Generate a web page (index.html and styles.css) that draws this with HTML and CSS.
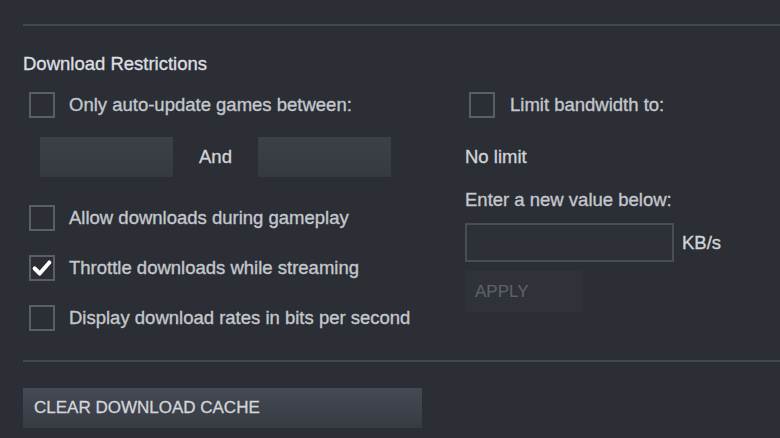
FILE: index.html
```html
<!DOCTYPE html>
<html lang="en">
<head>
    <meta charset="UTF-8">
    <meta name="viewport" content="width=device-width, initial-scale=1.0">
    <title>Downloads</title>
    <link rel="stylesheet" href="styles.css">
</head>
<body>
    <div class="page">
        <hr class="divider top">
        <h3 class="section-title">Download Restrictions</h3>
        <div class="columns">
            <div class="col-left">
                <label class="check-row">
                    <span class="box"></span>
                    <span>Only auto-update games between:</span>
                </label>
                <div class="time-range">
                    <div class="time-field"></div>
                    <span class="and">And</span>
                    <div class="time-field"></div>
                </div>
                <label class="check-row">
                    <span class="box"></span>
                    <span>Allow downloads during gameplay</span>
                </label>
                <label class="check-row">
                    <span class="box checked">
                        <svg viewBox="0 0 24 24" width="22" height="22"><path d="M4 12.5 L9.5 18 L20 6" fill="none" stroke="#fff" stroke-width="4.4" stroke-linecap="round" stroke-linejoin="round"/></svg>
                    </span>
                    <span>Throttle downloads while streaming</span>
                </label>
                <label class="check-row">
                    <span class="box"></span>
                    <span>Display download rates in bits per second</span>
                </label>
            </div>
            <div class="col-right">
                <label class="check-row">
                    <span class="box"></span>
                    <span>Limit bandwidth to:</span>
                </label>
                <p class="limit-value">No limit</p>
                <p class="limit-hint">Enter a new value below:</p>
                <div class="rate-row">
                    <div class="rate-field"></div>
                    <span class="unit">KB/s</span>
                </div>
                <button class="apply-btn">APPLY</button>
            </div>
        </div>
        <hr class="divider bottom">
        <button class="cache-btn">CLEAR DOWNLOAD CACHE</button>
    </div>
</body>
</html>
```

FILE: styles.css
```css
body {
    margin: 0;
    background: #2b2e34;
    font-family: "Liberation Sans", Arial, sans-serif;
    font-size: 18.5px;
    line-height: 22px;
    color: #c3c7cd;
    -webkit-text-stroke: 0.35px currentColor;
    height: 438px;
    overflow: hidden;
}
.page {
    padding: 24px 0 0 23px;
}
.divider {
    border: 0;
    height: 2px;
    background: #43474e;
    margin: 0;
}
.section-title {
    margin: 27px 0 0 0;
    font-size: 18.5px;
    font-weight: normal;
    color: #dcdee1;
    line-height: 22px;
}
.columns {
    display: flex;
    margin-top: 17px;
}
.col-left {
    width: 442px;
}
.check-row {
    display: flex;
    align-items: center;
    height: 26px;
    padding-left: 6px;
    gap: 14px;
}
.box {
    width: 22px;
    height: 22px;
    border: 2px solid #5a5e65;
    box-sizing: content-box;
    display: flex;
    align-items: center;
    justify-content: center;
    flex-shrink: 0;
}
.box svg {
    display: block;
}
.time-range {
    display: flex;
    align-items: center;
    margin: 19px 0 28px 17px;
}
.time-field {
    width: 133px;
    height: 40px;
    background: linear-gradient(#3c4048, #353940);
}
.and {
    width: 85px;
    text-align: center;
    color: #d0d3d7;
}
.col-left .check-row + .check-row {
    margin-top: 24px;
}
.col-right .check-row {
    padding-left: 4px;
    gap: 15px;
}
.limit-value {
    margin: 28px 0 0 0;
    color: #d0d3d7;
}
.limit-hint {
    margin: 21px 0 0 0;
}
.rate-row {
    display: flex;
    align-items: center;
    margin-top: 12px;
    gap: 8px;
}
.rate-field {
    width: 205px;
    height: 35px;
    border: 2px solid #494d55;
    background: #2d3137;
}
.unit {
    color: #d0d3d7;
}
.apply-btn {
    display: block;
    margin-top: 9px;
    width: 118px;
    height: 41px;
    border: 0;
    background: #2f3238;
    color: #5d6167;
    -webkit-text-stroke: 0.2px currentColor;
    font-family: inherit;
    font-size: 17px;
    text-align: left;
    padding: 0 10px;
}
.divider.bottom {
    margin-top: 29px;
}
.cache-btn {
    display: block;
    margin-top: 26px;
    width: 399px;
    height: 40px;
    border: 0;
    background: linear-gradient(#444954, #373b43);
    color: #d3d6da;
    -webkit-text-stroke: 0.3px currentColor;
    font-family: inherit;
    font-size: 17px;
    text-align: left;
    padding: 0 11px 0;
}
```
